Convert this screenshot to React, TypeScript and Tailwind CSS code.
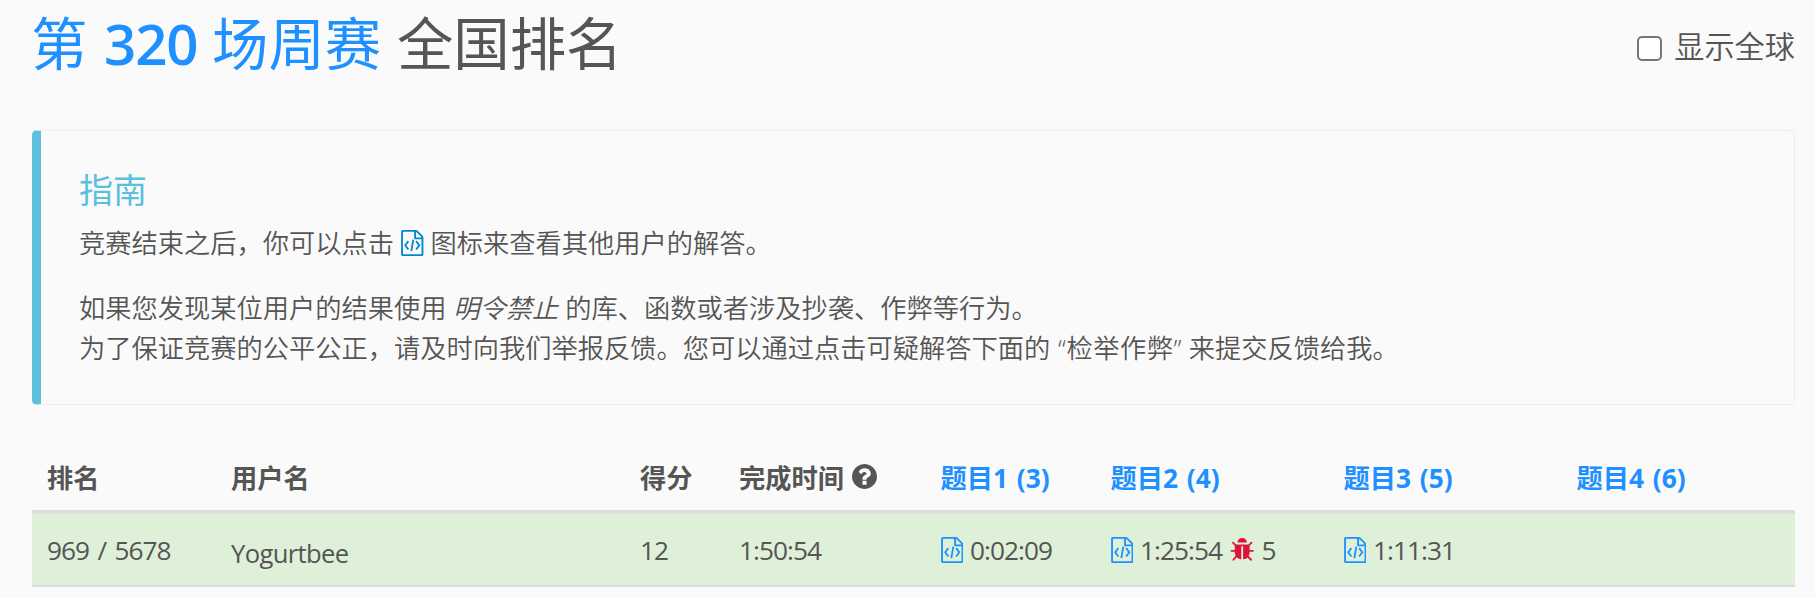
import type { ReactNode } from "react";

const FONT = "font-['Open_Sans','Noto_Sans_CJK_SC',sans-serif]";

function FileCodeIcon({ className = "" }: { className?: string }) {
  return (
    <svg viewBox="0 0 1536 1792" className={`h-[26px] w-[22.5px] shrink-0 ${className}`} fill="currentColor" aria-hidden="true">
      <path d="M1468 380q28 28 48 76t20 88v1152q0 40-28 68t-68 28H96q-40 0-68-28t-28-68V96q0-40 28-68T96 0h896q40 0 88 20t76 48zM1024 136v376h376q-10-29-22-41l-313-313q-12-12-41-22zm384 1528V640H992q-40 0-68-28t-28-68V128H128v1536h1280z" />
      <path d="M500 768L284 1056l216 288M1036 768l216 288-216 288M842 668l-136 792" fill="none" stroke="currentColor" strokeWidth="124" />
    </svg>
  );
}

function BugIcon() {
  return (
    <svg viewBox="64 0 1664 1792" className="h-[26px] w-[24.4px] shrink-0 text-[#dc143c]" fill="currentColor" aria-hidden="true">
      <path d="M1696 960q0 26-19 45t-45 19h-224q0 171-67 290l208 209q19 19 19 45t-19 45q-18 19-45 19t-45-19l-198-197q-5 5-15 13t-42 28.5-65 36.5-82 29-97 13v-896h-128v896q-51 0-101.5-13.5t-87-33-66-39-43.5-32.5l-15-14-183 207q-20 21-48 21-24 0-43-16-19-18-20.5-44.5t15.5-46.5l202-227q-58-114-58-274h-224q-26 0-45-19t-19-45 19-45 45-19h224v-294l-173-173q-19-19-19-45t19-45 45-19 45 19l173 173h844l173-173q19-19 45-19t45 19 19 45-19 45l-173 173v294h224q26 0 45 19t19 45zm-480-576h-640q0-133 93.5-226.5t226.5-93.5 226.5 93.5 93.5 226.5z" />
    </svg>
  );
}

function QuestionIcon() {
  return (
    <svg viewBox="128 128 1536 1536" className="h-[25px] w-[25px] shrink-0" fill="currentColor" aria-hidden="true">
      <path d="M1024 1376v-192q0-14-9-23t-23-9h-192q-14 0-23 9t-9 23v192q0 14 9 23t23 9h192q14 0 23-9t9-23zm256-672q0-88-55.5-163t-138.5-116-170-41q-243 0-371 213-15 24 8 42l132 100q7 6 19 6 16 0 25-12 53-68 86-92 34-24 86-24 48 0 85.5 26t37.5 59q0 38-20 61t-68 45q-63 28-115.5 86.5t-52.5 125.5v36q0 14 9 23t23 9h192q14 0 23-9t9-23q0-19 21.5-49.5t54.5-49.5q32-18 49-28.5t46-35 44.5-48 28-60.5 12.5-81zm384 192q0 209-103 385.5t-279.5 279.5-385.5 103-385.5-103-279.5-279.5-103-385.5 103-385.5 279.5-279.5 385.5-103 385.5 103 279.5 279.5 103 385.5z" />
    </svg>
  );
}

const COLS = "grid grid-cols-[184px_409px_99px_201.5px_170px_233px_233px_1fr] pl-[15px]";

function Problem({ children }: { children: ReactNode }) {
  return (
    <a href="#" className="text-[#1e90ff] [word-spacing:2px]">
      {children}
    </a>
  );
}

function Solved({ time, bugs }: { time: string; bugs?: number }) {
  return (
    <div className="flex items-center">
      <FileCodeIcon className="text-[#1e90ff]" />
      <span className="ml-[7px]">{time}</span>
      {bugs !== undefined && (
        <>
          <span className="ml-[8px] flex">
            <BugIcon />
          </span>
          <span className="ml-[7px]">{bugs}</span>
        </>
      )}
    </div>
  );
}

export default function App() {
  return (
    <div className={`${FONT} h-[598px] overflow-hidden whitespace-nowrap bg-[#fafafa] pl-[32px] pr-[20px] text-[26.25px] text-[#555]`} lang="zh-CN">
      <header className="flex h-[130px] items-start justify-between">
        <h1 className="-ml-px pt-[4px] text-[56.4px] leading-[80px]">
          <a href="#" className="text-[#1e90ff]">
            第 <span className="ml-[2px] inline-block font-semibold tracking-[-0.02em]">320</span> 场周赛
          </a>{" "}
          <span className="ml-px">全国排名</span>
        </h1>
        <label className="flex items-center pt-[26px] text-[30.2px] font-[350] leading-[42px]">
          <input type="checkbox" className="mr-[12px] mt-[2px] h-[25px] w-[25px] appearance-none rounded-[5px] border-2 border-[#767676] bg-white" />
          显示全球
        </label>
      </header>

      <section className="h-[275px] rounded-[5px] border border-l-[9px] border-[#eee] border-l-[#5bc0de] pl-[38px] pt-[34px]">
        <h4 className="text-[34px] leading-[50px] text-[#5bc0de]">指南</h4>
        <p className="mt-[8px] flex items-center font-[350] leading-[40px]">
          竞赛结束之后，你可以点击
          <FileCodeIcon className="mx-[7px] text-[#0088cc]" />
          图标来查看其他用户的解答。
        </p>
        <p className="mt-[25px] font-[350] leading-[40px]">
          如果您发现某位用户的结果使用 <em>明令禁止</em> 的库、函数或者涉及抄袭、作弊等行为。
          <br />
          为了保证竞赛的公平公正，请及时向我们举报反馈。您可以通过点击可疑解答下面的{" "}
          <span className="ml-px tracking-[0.02em]">“检举作弊”</span> 来提交反馈给我。
        </p>
      </section>

      <div className="mt-[41px]">
        <div className={`${COLS} h-[68px] items-center border-b-4 border-[#ddd] font-bold leading-[38px]`}>
          <div>排名</div>
          <div>用户名</div>
          <div>得分</div>
          <div className="flex items-center">
            完成时间
            <span className="mb-[4px] ml-[8px] flex">
              <QuestionIcon />
            </span>
          </div>
          <Problem>题目1 (3)</Problem>
          <Problem>题目2 (4)</Problem>
          <Problem>题目3 (5)</Problem>
          <Problem>题目4 (6)</Problem>
        </div>
        <div className={`${COLS} h-[73px] items-center border-b-2 border-[#ddd] bg-[#dff0d8] font-normal leading-[38px] tracking-[-0.037em]`}>
          <div className="[word-spacing:2.5px]">969 / 5678</div>
          <div className="pt-[8px] text-[25.6px] tracking-[-0.025em]">Yogurtbee</div>
          <div>12</div>
          <div>1:50:54</div>
          <Solved time="0:02:09" />
          <Solved time="1:25:54" bugs={5} />
          <Solved time="1:11:31" />
        </div>
      </div>
    </div>
  );
}
